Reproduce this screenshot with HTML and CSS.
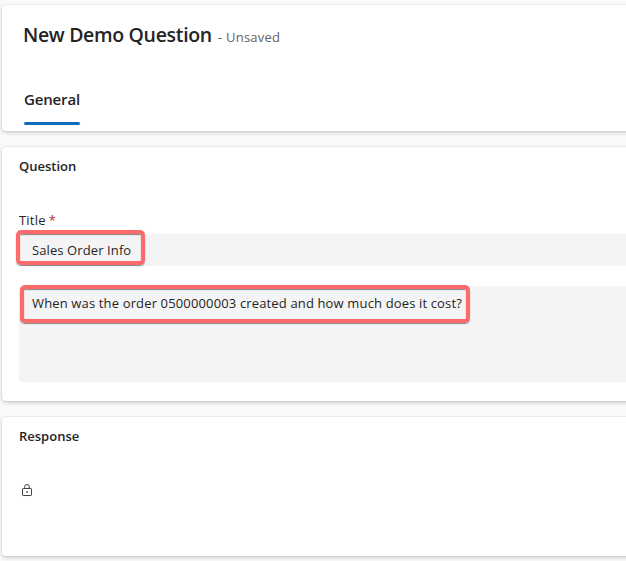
FILE: index.html
```html
<!DOCTYPE html>
<html lang="en">
<head>
<meta charset="utf-8">
<title>New Demo Question</title>
<link rel="stylesheet" href="styles.css">
</head>
<body>
<main class="form">
  <header class="card header">
    <div class="heading">
      <h1 class="title">New Demo Question</h1>
      <span class="status">- Unsaved</span>
    </div>
    <nav class="tabs"><span class="tab">General</span></nav>
  </header>
  <section class="card question">
    <h2 class="section-title">Question</h2>
    <div class="label"><span class="label-text">Title</span><span class="required">*</span></div>
    <div class="field">
      <span class="field-text">Sales Order Info</span>
      <span class="highlight highlight-title"></span>
    </div>
    <div class="field area">
      <span class="field-text long-text">When was the order 0500000003 created and how much does it cost?</span>
      <span class="highlight highlight-area"></span>
    </div>
  </section>
  <section class="card response">
    <h2 class="section-title">Response</h2>
    <svg class="lock" width="12" height="14" viewBox="0 0 12 14" fill="none" stroke="#4a4541">
      <rect x="1.5" y="5.5" width="9" height="7" rx=".6"/>
      <path d="M3.7 5.5V3.8a2.3 2.3 0 0 1 4.6 0v1.7"/>
      <rect x="5.25" y="8.25" width="1.5" height="1.5" fill="#4a4541" stroke="none"/>
    </svg>
  </section>
</main>
</body>
</html>
```
FILE: styles.css
```css
* { box-sizing: border-box; }
body {
  margin: 0;
  height: 561px;
  overflow: hidden;
  background: #fafafa;
  color: #242424;
  font: 14px/20px "Open Sans", "Noto Sans", sans-serif;
}
.form {
  display: flex;
  flex-direction: column;
  gap: 16px;
  padding: 5px 0 0 2px;
}
.card {
  width: 640px;
  background: #fff;
  border-radius: 4px;
  box-shadow: 0 0 2px rgba(0, 0, 0, .16), 0 2px 4px rgba(0, 0, 0, .16);
}
.header {
  height: 126px;
  padding: 16px 22px 0;
  display: flex;
  flex-direction: column;
}
.heading { display: flex; align-items: baseline; height: 28px; margin-left: -1px; }
.title {
  flex: none;
  margin: 0;
  width: 195px;
  font-size: 19.5px;
  line-height: 28px;
  font-weight: 600;
  letter-spacing: -.33px;
  white-space: nowrap;
}
.status { color: #616161; font-size: 13px; letter-spacing: .22px; white-space: nowrap; }
.tabs { display: flex; margin-top: 39px; }
.tab {
  position: relative;
  width: 56px;
  height: 37px;
  font-size: 15px;
  line-height: 22px;
  font-weight: 600;
  letter-spacing: -.15px;
}
.tab::after {
  content: "";
  position: absolute;
  left: 0;
  right: 0;
  bottom: 0;
  height: 3px;
  border-radius: 2px;
  background: #0f6cbd;
}
.question { height: 254px; padding: 9px 0 0 17px; }
.section-title { margin: 0; font-size: 13px; line-height: 20px; font-weight: 600; }
.label { display: flex; gap: 3px; margin-top: 34px; height: 24px; font-size: 13px; }
.label-text { letter-spacing: .2px; }
.required { color: #bc2f32; }
.field {
  position: relative;
  height: 32px;
  padding: 6px 13px;
  border-radius: 4px;
  background: #f4f4f4;
}
.field-text { font-size: 13px; letter-spacing: .1px; white-space: nowrap; }
.long-text { letter-spacing: .145px; }
.area { height: 96px; margin-top: 20px; padding-top: 7px; }
.highlight {
  position: absolute;
  border: 4px solid #ff6b6b;
  border-radius: 5px;
  box-shadow: 0 1px 1px rgba(60, 60, 60, .6), inset 0 1px 1px rgba(60, 60, 60, .6);
}
.highlight-title { left: -3px; top: -4px; width: 129px; height: 35px; }
.highlight-area { left: 1px; top: -1px; width: 450px; height: 38px; }
.response { height: 139px; padding: 9px 0 0 17px; }
.lock { display: block; margin: 37px 0 0 2px; }
```
